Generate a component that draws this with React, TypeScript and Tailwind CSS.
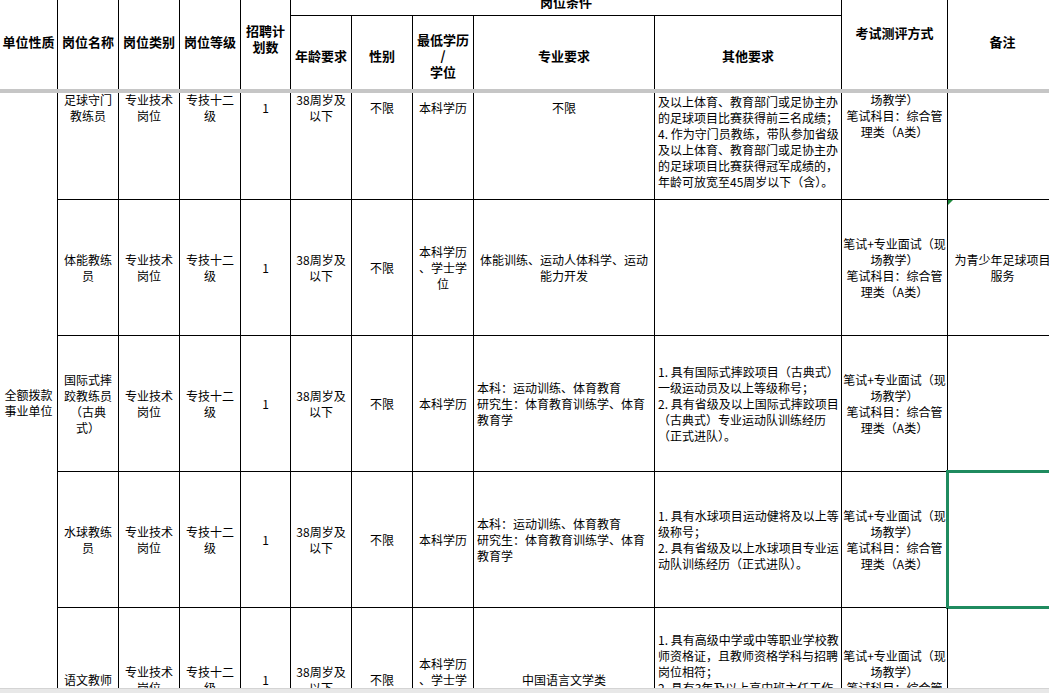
import React from 'react';

type Cell = {
  lines: string[];
  left?: boolean;
  flag?: boolean;
  selected?: boolean;
  pad?: string;
};

type RowData = {
  h: string;
  cells: Cell[];
};

// widths of the body columns right of 单位性质
const W = [
  'w-[61px]',
  'w-[61px]',
  'w-[61px]',
  'w-[50px]',
  'w-[61px]',
  'w-[61px]',
  'w-[61px]',
  'w-[181px]',
  'w-[187px]',
  'w-[106px]',
  'w-[110px]',
];

const exam = ['笔试+专业面试（现', '场教学）', '笔试科目：综合管', '理类（A类）'];
const type = ['专业技术', '岗位'];
const level = ['专技十二', '级'];
const age = ['38周岁及', '以下'];
const sportMajor = ['本科：运动训练、体育教育', '研究生：体育教育训练学、体育', '教育学'];

const rows: RowData[] = [
  {
    h: 'h-[184px]',
    cells: [
      { lines: ['足球守门', '教练员'] },
      { lines: type },
      { lines: level },
      { lines: ['1'] },
      { lines: age },
      { lines: ['不限'] },
      { lines: ['本科学历'] },
      { lines: ['不限'] },
      {
        left: true,
        pad: 'pt-[5px]',
        lines: [
          '1. 具有足球项目一级运动员及以上',
          '等级称号；',
          '2. 具有省级及以上足球项目专业运',
          '3. 作为守门员教练，带队参加省级',
          '及以上体育、教育部门或足协主办',
          '的足球项目比赛获得前三名成绩；',
          '4. 作为守门员教练，带队参加省级',
          '及以上体育、教育部门或足协主办',
          '的足球项目比赛获得冠军成绩的，',
          '年龄可放宽至45周岁以下（含）。',
        ],
      },
      { lines: exam },
      { lines: [] },
    ],
  },
  {
    h: 'h-[136px]',
    cells: [
      { lines: ['体能教练', '员'] },
      { lines: type },
      { lines: level },
      { lines: ['1'] },
      { lines: age },
      { lines: ['不限'] },
      { lines: ['本科学历', '、学士学', '位'] },
      { lines: ['体能训练、运动人体科学、运动', '能力开发'] },
      { lines: [] },
      { lines: exam },
      { lines: ['为青少年足球项目', '服务'], flag: true },
    ],
  },
  {
    h: 'h-[136px]',
    cells: [
      { lines: ['国际式摔', '跤教练员', '（古典', '式）'] },
      { lines: type },
      { lines: level },
      { lines: ['1'] },
      { lines: age },
      { lines: ['不限'] },
      { lines: ['本科学历'] },
      { lines: sportMajor, left: true },
      {
        left: true,
        lines: [
          '1. 具有国际式摔跤项目（古典式）',
          '一级运动员及以上等级称号；',
          '2. 具有省级及以上国际式摔跤项目',
          '（古典式）专业运动队训练经历',
          '（正式进队）。',
        ],
      },
      { lines: exam },
      { lines: [] },
    ],
  },
  {
    h: 'h-[136px]',
    cells: [
      { lines: ['水球教练', '员'] },
      { lines: type },
      { lines: level },
      { lines: ['1'] },
      { lines: age },
      { lines: ['不限'] },
      { lines: ['本科学历'] },
      { lines: sportMajor, left: true },
      {
        left: true,
        lines: [
          '1. 具有水球项目运动健将及以上等',
          '级称号；',
          '2. 具有省级及以上水球项目专业运',
          '动队训练经历（正式进队）。',
        ],
      },
      { lines: exam },
      { lines: [], selected: true },
    ],
  },
  {
    h: 'h-[144px]',
    cells: [
      { lines: ['语文教师'] },
      { lines: type },
      { lines: level },
      { lines: ['1'] },
      { lines: age },
      { lines: ['不限'] },
      { lines: ['本科学历', '、学士学', '位'] },
      { lines: ['中国语言文学类'] },
      {
        left: true,
        lines: [
          '1. 具有高级中学或中等职业学校教',
          '师资格证，且教师资格学科与招聘',
          '岗位相符；',
          '2. 具有3年及以上高中班主任工作',
          '经历；',
          '3. 具有中学语文教学经历。',
        ],
      },
      { lines: exam },
      { lines: [] },
    ],
  },
];

function BodyRow({ row }: { row: RowData }) {
  return (
    <div className={`flex border-b border-black ${row.h}`}>
      {row.cells.map((c, i) => (
        <div
          key={i}
          className={`${W[i]} relative shrink-0 border-r border-black flex flex-col justify-center ${
            c.left ? 'items-start pl-[3px]' : 'items-center'
          } ${c.pad ?? ''}`}
        >
          {c.lines.map((l, j) => (
            <div key={j} className="whitespace-nowrap leading-[16px]">
              {l}
            </div>
          ))}
          {c.flag && (
            <div className="absolute left-0 top-0 h-0 w-0 border-t-[5px] border-r-[5px] border-t-[#1e8a3c] border-r-transparent" />
          )}
          {c.selected && (
            <div className="pointer-events-none absolute -left-[2px] -top-[2px] -bottom-[2px] right-0 border-[3px] border-[#1f8b5f]" />
          )}
        </div>
      ))}
    </div>
  );
}

function HeaderGrid() {
  const th = 'border-r border-black flex flex-col items-center justify-center leading-[16px]';
  return (
    <div className="grid -mt-[8px] h-[97px] grid-cols-[58px_61px_61px_61px_50px_61px_61px_61px_181px_187px_106px_110px] grid-rows-[24px_73px]">
      <div className={`${th} row-span-2 pt-[3px]`}>单位性质</div>
      <div className={`${th} row-span-2 pt-[3px]`}>岗位名称</div>
      <div className={`${th} row-span-2 pt-[3px]`}>岗位类别</div>
      <div className={`${th} row-span-2 pt-[3px]`}>岗位等级</div>
      <div className={`${th} row-span-2 pb-[4px]`}>
        <div>招聘计</div>
        <div>划数</div>
      </div>
      <div className={`${th} col-span-5 border-b pb-[4px]`}>岗位条件</div>
      <div className={`${th} row-span-2 pb-[16px]`}>考试测评方式</div>
      <div className={`${th} row-span-2 pt-[3px]`}>备注</div>
      <div className={`${th} pt-[7px]`}>年龄要求</div>
      <div className={`${th} pt-[7px]`}>性别</div>
      <div className={`${th} pt-[7px] leading-[14px]`}>
        <div>最低学历</div>
        <div>/</div>
        <div>学位</div>
      </div>
      <div className={`${th} pt-[7px]`}>专业要求</div>
      <div className={`${th} pt-[7px]`}>其他要求</div>
    </div>
  );
}

export default function App() {
  return (
    <div className="h-[693px] w-[1049px] overflow-hidden bg-white text-black font-['Noto_Sans_CJK_SC','Noto_Sans',sans-serif]">
      <div className="h-[89px] overflow-hidden text-[13px] font-bold">
        <HeaderGrid />
      </div>
      <div className="h-[4px] bg-[#c6c6c6]" />
      <div className="h-[595px] overflow-hidden text-[12px]">
        <div className="-mt-[77px] flex">
          <div className="w-[58px] shrink-0 border-r border-black pt-[371px] flex flex-col items-center leading-[16px]">
            <div>全额拨款</div>
            <div>事业单位</div>
          </div>
          <div className="flex flex-col">
            {rows.map((r, i) => (
              <BodyRow key={i} row={r} />
            ))}
          </div>
        </div>
      </div>
      <div className="h-[5px] border-t border-[#d4d4d4] bg-[#e8e8e8]" />
    </div>
  );
}
